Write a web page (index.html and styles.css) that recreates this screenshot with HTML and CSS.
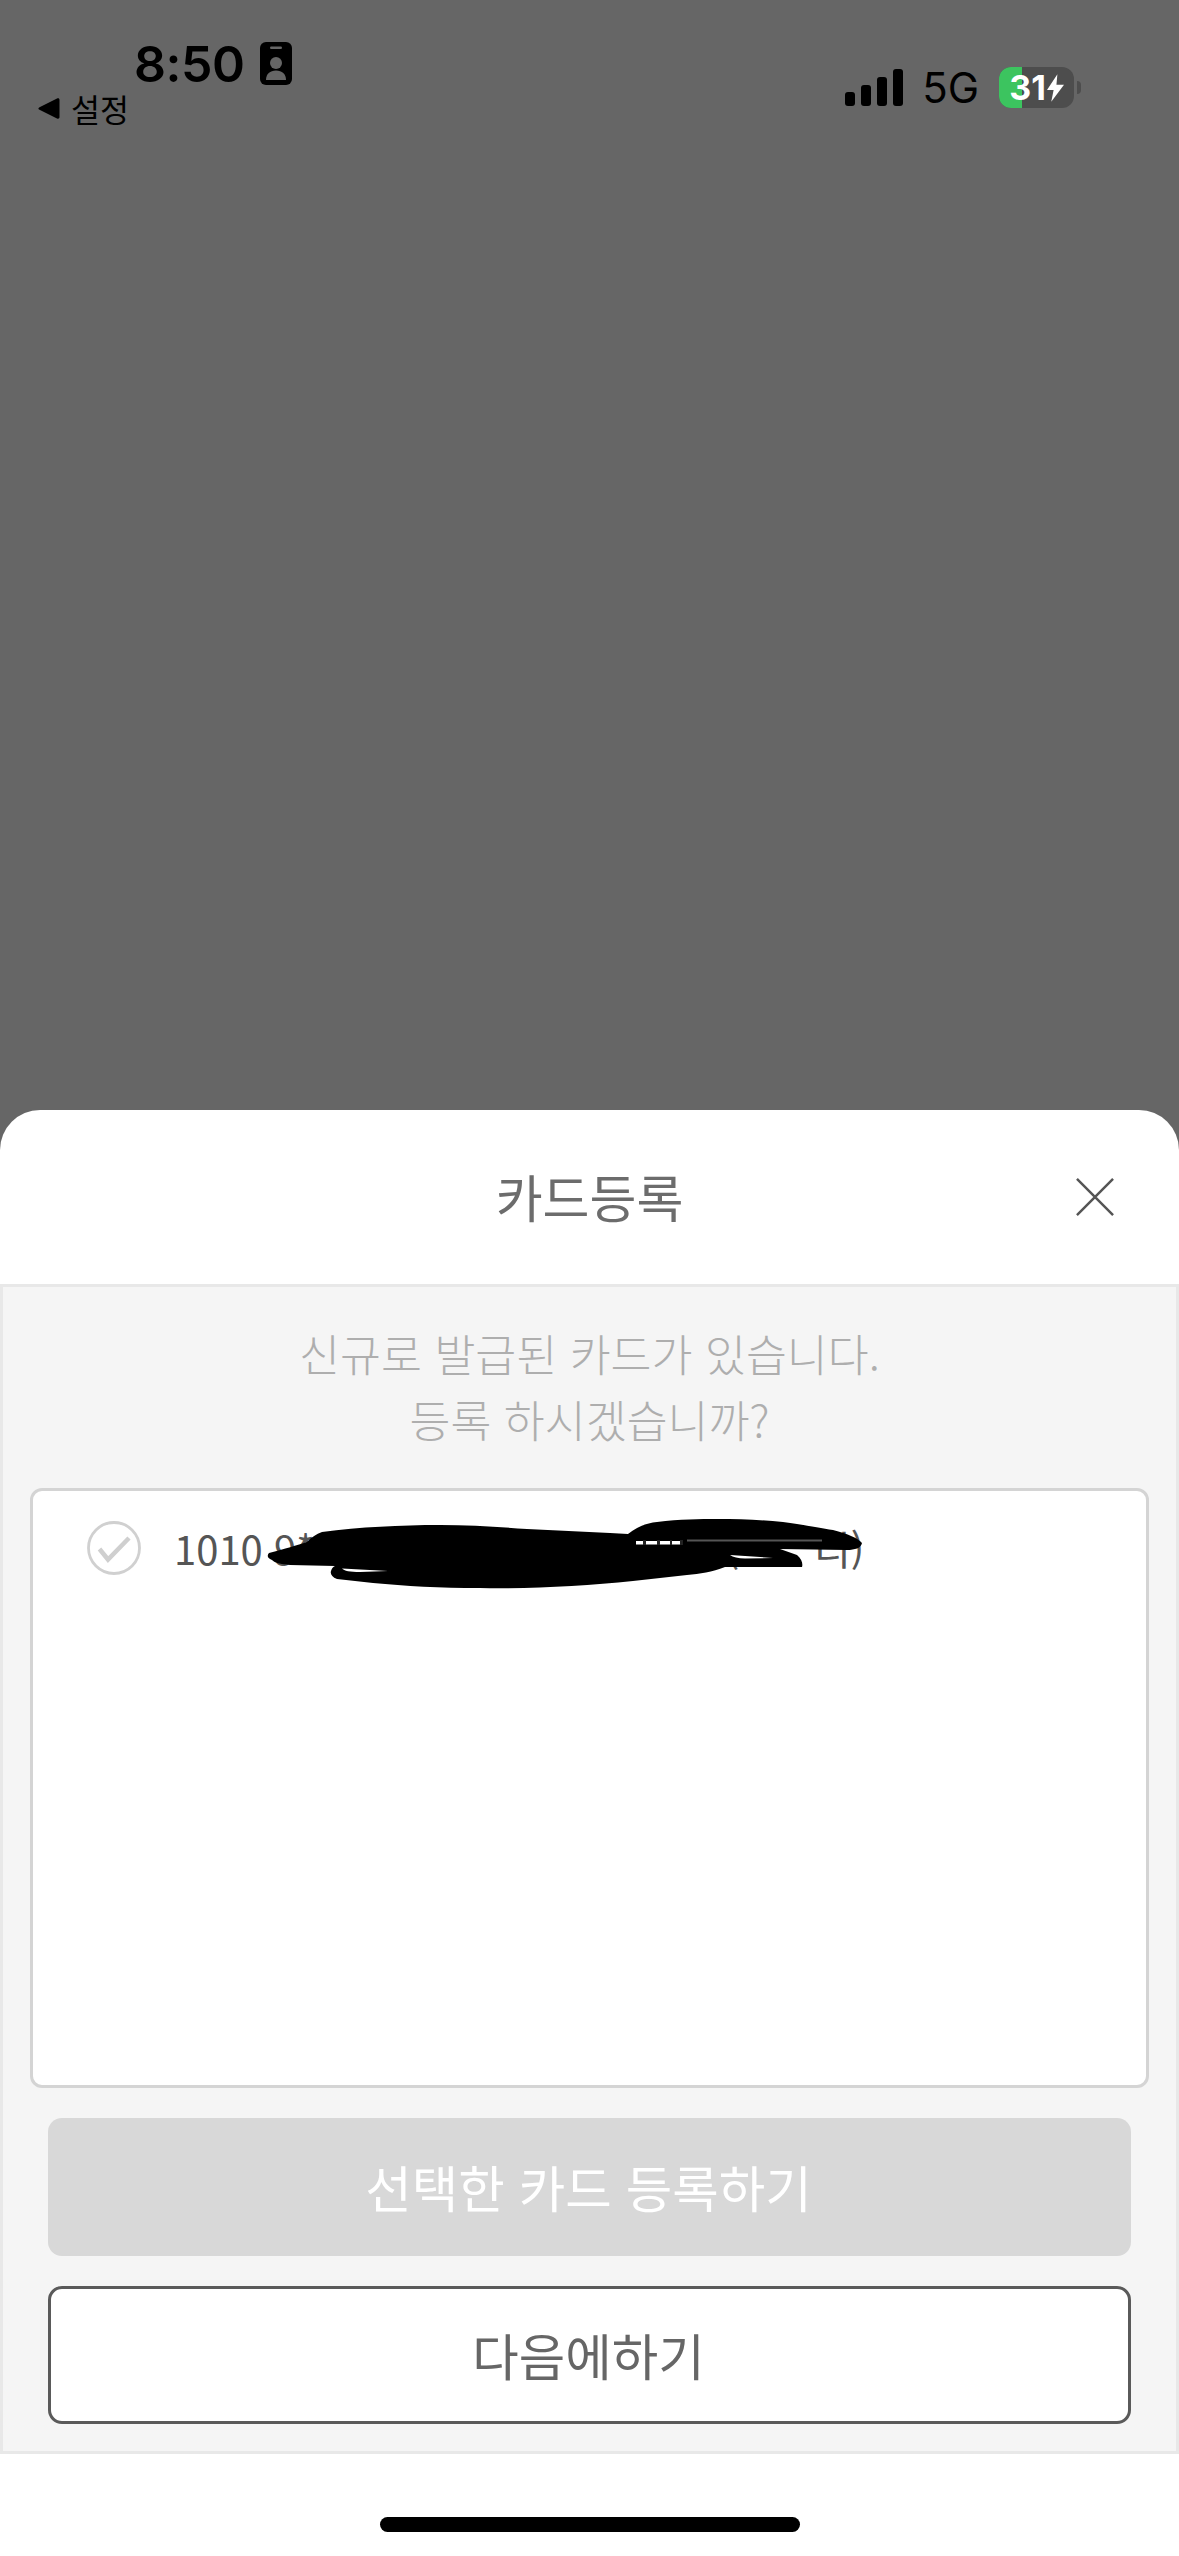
FILE: index.html
```html
<!DOCTYPE html>
<html lang="ko">
<head>
<meta charset="utf-8">
<title>카드등록</title>
<link rel="stylesheet" href="styles.css">
</head>
<body>
<div class="backdrop">
  <div class="status">
    <div class="status-left">
      <div class="time-row">
        <span class="time">8:50</span>
        <svg class="id-icon" viewBox="0 0 32 43"><path d="M6 0h20a6 6 0 0 1 6 6v31a6 6 0 0 1-6 6H6a6 6 0 0 1-6-6V6a6 6 0 0 1 6-6z" fill="#000"/><rect x="10" y="4.500" width="12" height="2.500" rx="1.200" fill="#666"/><circle cx="16" cy="21" r="6" fill="#666"/><path d="M6 38c0-6 4-9.500 10-9.500s10 3.500 10 9.500z" fill="#666"/></svg>
      </div>
      <div class="back-row">
        <svg class="back-icon" viewBox="0 0 22 21"><path d="M1.500 9.200 19 .6c1.500-.6 2.500 0 2.500 1.500v16.800c0 1.500-1 2.100-2.500 1.500L1.500 11.800c-1.500-.8-1.500-1.800 0-2.600z" fill="#000"/></svg>
        <span class="back-label">설정</span>
      </div>
    </div>
    <div class="status-right">
      <div class="signal">
        <i class="bar bar1"></i><i class="bar bar2"></i><i class="bar bar3"></i><i class="bar bar4"></i>
      </div>
      <span class="network">5G</span>
      <div class="battery">
        <div class="battery-body">
          <div class="battery-fill"></div>
          <span class="battery-text">31</span>
          <svg class="bolt" viewBox="0 0 18 29"><path d="M11 0 0 16.500h7L4.500 29 18 11h-8z" fill="#fff"/></svg>
        </div>
        <i class="battery-nub"></i>
      </div>
    </div>
  </div>
</div>
<main class="sheet">
  <header class="sheet-head">
    <h1 class="sheet-title">카드등록</h1>
    <svg class="close" viewBox="0 0 40 40"><path d="M1 1l38 38M39 1 1 39" stroke="#555" stroke-width="2.600" fill="none"/></svg>
  </header>
  <section class="panel">
    <p class="message">신규로 발급된 카드가 있습니다.<br>등록 하시겠습니까?</p>
    <div class="card-list">
      <div class="card-row">
        <svg class="check" viewBox="0 0 54 54"><circle cx="27" cy="27" r="25.500" fill="#fff" stroke="#d0d0d0" stroke-width="2.800"/><path d="M12.500 28 21 38.500 42 17" fill="none" stroke="#cfcfcf" stroke-width="4.500"/></svg>
        <span class="card-text">1010 9*** **** **** **** ***** (****디)</span>
      </div>
      <svg class="scribble" viewBox="260 1515 610 80">
        <path d="M269 1553C285 1549 297 1545 307 1542 312 1537 316 1534 322 1532 360 1527 400 1525 440 1525 470 1525 500 1527 527 1529L610 1533 628 1534C637 1527 646 1523 657 1522 680 1519 700 1519 717 1519 740 1519 762 1520 783 1522 805 1525 820 1528 833 1530 848 1534 858 1538 862 1543 861 1548 855 1550 847 1550L780 1549 797 1555C802 1559 803 1564 802 1567L725 1567C712 1572 700 1574 687 1575L633 1581C585 1586 530 1589 480 1588 440 1588 405 1586 373 1583L337 1579C332 1577 330 1574 331 1571 332 1568 333 1567 335 1566L290 1565C280 1564 275 1563 272 1560 267 1558 267 1555 269 1553Z" fill="#000"/>
        <path d="M342 1568.500 388 1571 360 1572C350 1572 344 1571 342 1568.500Z" fill="#fff"/>
        <path d="M636 1541h47v3.500h-47z" fill="#fff"/>
        <path d="M643 1540h3v5h-3zM657 1540h3v5h-3zM670 1540h2v5h-2zM680 1540h3v5h-3z" fill="#222"/>
        <path d="M687 1539.500h135v2h-135z" fill="#555"/>
        <path d="M730 1555 773 1558 745 1558.500C738 1558.500 733 1557 730 1555Z" fill="#fff"/>
      </svg>
    </div>
    <button class="btn btn-primary" type="button">선택한 카드 등록하기</button>
    <button class="btn btn-secondary" type="button">다음에하기</button>
  </section>
  <footer class="home-area"><i class="home-bar"></i></footer>
</main>
</body>
</html>
```

FILE: styles.css
```css
* { box-sizing: border-box; }
html, body { margin: 0; padding: 0; }
body {
  width: 1179px;
  height: 2556px;
  overflow: hidden;
  display: flex;
  flex-direction: column;
  background: #666;
  font-family: "Noto Sans CJK KR", "Noto Sans", sans-serif;
}
.backdrop { height: 1110px; flex: none; background: #666; }

.status { display: flex; justify-content: space-between; align-items: flex-start; padding: 36px 98px 0 38px; }
.status-left { display: flex; flex-direction: column; }
.time-row { display: flex; align-items: center; gap: 16px; margin-left: 96px; height: 56px; }
.time { font-family: Inter, sans-serif; font-weight: 600; font-size: 50px; line-height: 56px; color: #000; letter-spacing: -0.5px; }
.id-icon { width: 32px; height: 43px; margin-top: -1px; }
.back-row { display: flex; align-items: center; gap: 11px; margin-top: -4px; }
.back-icon { width: 22px; height: 21px; }
.back-label { font-size: 31.500px; line-height: 40px; color: #000; }

.status-right { display: flex; align-items: center; padding-top: 31px; height: 72px; }
.signal { display: flex; align-items: flex-end; gap: 6px; height: 37px; }
.bar { display: block; width: 10px; background: #000; border-radius: 3px; }
.bar1 { height: 14px; }
.bar2 { height: 21px; }
.bar3 { height: 29px; }
.bar4 { height: 37px; }
.network { font-family: Inter, sans-serif; font-size: 42px; line-height: 41px; color: #000; margin: 0 20px 0 19px; }
.battery { display: flex; align-items: center; gap: 3px; }
.battery-body { position: relative; display: flex; align-items: center; justify-content: center; gap: 1px; width: 75px; height: 41px; border-radius: 12px; background: #4d4d4d; overflow: hidden; }
.battery-fill { position: absolute; left: 0; top: 0; bottom: 0; width: 23px; background: #3cc45f; }
.battery-text { position: relative; font-family: Inter, sans-serif; font-weight: 700; font-size: 34px; line-height: 41px; color: #fff; }
.bolt { position: relative; width: 17px; height: 28px; }
.battery-nub { display: block; width: 4px; height: 13px; background: #4d4d4d; border-radius: 0 4px 4px 0; }

.sheet { flex: 1; display: flex; flex-direction: column; background: #fff; border-radius: 40px 40px 0 0; }
.sheet-head { position: relative; height: 174px; display: flex; align-items: center; justify-content: center; flex: none; padding-bottom: 2px; }
.sheet-title { margin: 0; font-size: 51px; line-height: 60px; font-weight: 400; color: #6c6c6c; }
.close { position: absolute; right: 65px; top: 67px; width: 38px; height: 40px; }

.panel { flex: none; height: 1170px; background: #f5f5f5; border: 3px solid #e8e8e8; padding: 33px 27px 0; display: flex; flex-direction: column; }
.message { margin: 0; text-align: center; font-size: 44.500px; line-height: 66px; font-weight: 300; color: #aeaeae; }
.card-list { position: relative; height: 600px; margin-top: 36px; background: #fff; border: 3px solid #d4d4d4; border-radius: 12px; flex: none; }
.card-row { display: flex; align-items: center; gap: 33px; padding: 30px 0 0 54px; }
.check { width: 54px; height: 54px; flex: none; }
.card-text { font-size: 40px; line-height: 54px; color: #555; white-space: nowrap; }
.scribble { position: absolute; left: 227px; top: 24px; width: 610px; height: 80px; }

.btn { display: block; flex: none; width: 1083px; height: 138px; margin: 30px 0 0 18px; border-radius: 14px; font-family: inherit; font-size: 50.500px; font-weight: 400; padding: 0 2px 2px 0; }
.btn-primary { background: #d8d8d8; border: none; color: #fff; }
.btn-secondary { background: #fff; border: 3px solid #5a5a5a; color: #666; }

.home-area { flex: 1; display: flex; justify-content: center; padding-top: 63px; }
.home-bar { display: block; width: 420px; height: 15px; background: #000; border-radius: 8px; }
```
